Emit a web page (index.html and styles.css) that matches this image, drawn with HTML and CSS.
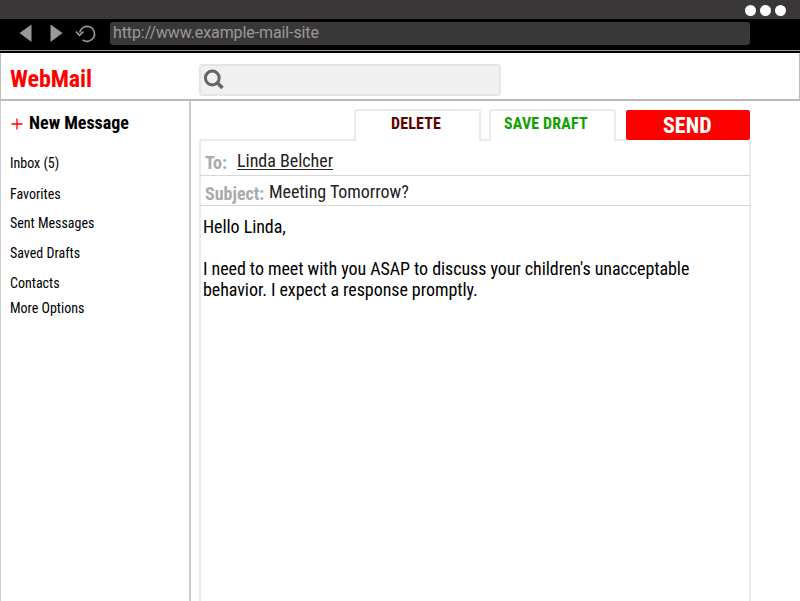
FILE: index.html
```html
<!DOCTYPE html>
<html lang="en">
<head>
<meta charset="utf-8">
<title>WebMail</title>
<link rel="stylesheet" href="styles.css">
</head>
<body>
<div class="window">
  <div class="titlebar"><i class="dot"></i><i class="dot"></i><i class="dot"></i></div>
  <div class="toolbar">
    <svg class="nav" width="110" height="31" viewBox="0 19 110 31">
      <path d="M19.500 33 31.500 24.500V42ZM50.500 24.500 62.500 33 50.500 42Z" fill="#999"/>
      <path d="M79.700 32.500A7.500 7.500 0 1 1 82.500 39.800M76 31.500 79.500 35.300 83.500 31.700" fill="none" stroke="#999" stroke-width="1.600"/>
    </svg>
    <div class="address"><span class="url">http://www.example-mail-site</span></div>
  </div>
  <header class="header">
    <div class="brand"><span>WebMail</span></div>
    <div class="search">
      <svg width="22" height="22" viewBox="0 0 22 22" fill="none" stroke="#666"><circle cx="9.300" cy="9" r="6.900" stroke-width="3"/><path d="m14.500 14 5 5" stroke-width="3.500"/></svg>
    </div>
  </header>
  <div class="main">
    <nav class="sidebar">
      <div class="new"><svg width="12" height="12" viewBox="0 0 12 12"><path d="M6 .5v11M.5 6h11" stroke="#f00" stroke-width="1.300"/></svg><span>New Message</span></div>
      <a>Inbox (5)</a><a class="favorites">Favorites</a><a>Sent Messages</a><a>Saved Drafts</a><a>Contacts</a><a class="more">More Options</a>
    </nav>
    <section class="composer">
      <div class="tabs">
        <div class="edge lead"></div>
        <div class="tab delete"><span>DELETE</span></div>
        <div class="edge gap"></div>
        <div class="tab save"><span>SAVE DRAFT</span></div>
        <div class="edge end"></div>
        <div class="send"><span>SEND</span></div>
      </div>
      <div class="sheet">
        <div class="field to"><b>To:</b><span class="person">Linda Belcher</span></div>
        <div class="field subject"><b>Subject:</b><span>Meeting Tomorrow?</span></div>
        <div class="message">Hello Linda,<br><br>I need to meet with you ASAP to discuss your children's unacceptable<br>behavior. I expect a response promptly.</div>
      </div>
    </section>
  </div>
</div>
</body>
</html>
```
FILE: styles.css
```css
* { box-sizing: border-box; }
body { margin: 0; background: #fff; font-family: "Roboto Condensed", Roboto, sans-serif; font-stretch: 75%; color: #000; overflow: hidden; }
span, a { white-space: nowrap; }
svg { display: block; flex: none; }
.window { width: 800px; height: 601px; display: flex; flex-direction: column; overflow: hidden; }
.titlebar { height: 19px; background: #3a3738; display: flex; justify-content: flex-end; gap: 4px; padding: 4.5px 14.5px 0 0; }
.dot { width: 11px; height: 11px; border-radius: 50%; background: #fff; }
.toolbar { height: 34px; background: linear-gradient(#999, #999) 0 31px / 100% 1px no-repeat #000; display: flex; }
.address { width: 640px; height: 23px; margin-top: 3px; border-radius: 3px; background: #3a3738; padding-left: 3px; line-height: 22px; color: #999; }
.url { font: 400 16px/22px Roboto, sans-serif; font-stretch: 95%; letter-spacing: -.1px; }
.header { height: 48px; border: 1px solid #bbb; border-top: 0; border-bottom: 2px solid #bbb; display: flex; }
.brand { width: 198px; padding: 12px 0 0 9px; font-size: 24px; font-weight: 700; line-height: 29px; letter-spacing: -.1px; color: #f00; }
.search { width: 302px; height: 32px; margin-top: 11px; border: 2px solid #e5e5e5; border-radius: 3px; background: #f0f0f0; padding: 3px 0 0 2px; }
.main { flex: 1; display: flex; }
.sidebar { width: 191px; border-left: 1px solid #ccc; border-right: 2px solid #ccc; padding: 9px 0 0 9px; display: flex; flex-direction: column; font-size: 14px; }
.new { height: 24px; margin-bottom: 18px; display: flex; align-items: center; font-size: 18px; font-weight: 700; }
.new svg { margin: 3px 6px 0 1px; }
.sidebar a { height: 30px; line-height: 22px; }
.sidebar a.favorites { padding-top: 1px; }
.sidebar a.more { margin-top: -5px; }
.composer { width: 552px; margin-left: 8px; padding-top: 8px; display: flex; flex-direction: column; }
.tabs { display: flex; height: 32px; }
.edge { align-self: flex-end; height: 2px; background: #ebebeb; }
.lead { width: 155px; border-radius: 2px 0 0; }
.gap { width: 8px; }
.end { width: 10px; }
.tab { width: 127px; border: 2px solid #ebebeb; border-bottom: 0; border-radius: 3px 3px 0 0; padding-top: 2px; font-size: 16px; font-weight: 700; line-height: 21px; letter-spacing: .15px; }
.delete { color: #600000; padding-left: 35px; }
.save { color: #10a000; padding-left: 13px; }
.send { width: 124px; height: 30px; margin-top: 1px; border-radius: 2px; background: #f00; color: #fff; font-size: 22px; font-weight: 700; line-height: 31px; padding-left: 37px; }
.sheet { flex: 1; border: 2px solid #ebebeb; border-width: 0 2px; }
.field { height: 30px; margin: 0 -1px; border-bottom: 1px solid #d6d6d6; padding-left: 5px; display: flex; font-size: 18px; line-height: 22px; color: #222; }
.field b { color: #aaa; }
.to { height: 35px; padding-top: 9px; }
.to b { width: 32px; padding-top: 2px; }
.person { height: 20px; border-bottom: 1px solid #222; line-height: 21px; letter-spacing: -.02px; }
.subject { padding-top: 5px; }
.subject b { width: 64px; padding-top: 2px; }
.subject span { letter-spacing: -.05px; }
.message { padding: 10px 0 0 2px; font-size: 18px; line-height: 21px; white-space: nowrap; letter-spacing: -.065px; }
```
